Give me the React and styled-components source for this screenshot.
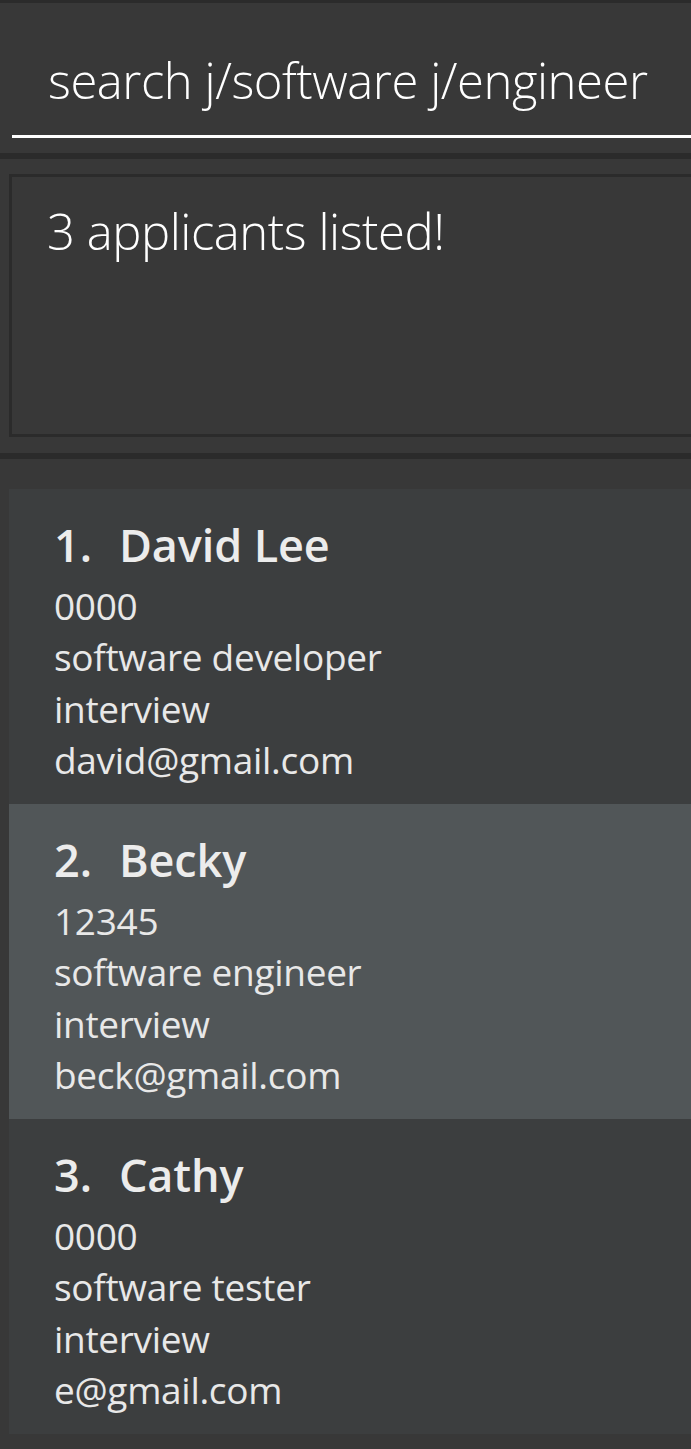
import React from 'react'
import styled, { createGlobalStyle } from 'styled-components'

const GlobalStyle = createGlobalStyle`
    html, body {
        margin: 0;
        padding: 0;
        background: #383838;
    }
    body {
        font-family: "Open Sans", "Noto Sans", sans-serif;
    }
`

const Window = styled.div`
    width: 100%;
    min-height: 1449px;
    display: flex;
    flex-direction: column;
    gap: 6px;
    padding-top: 3px;
    background: #2b2b2b;
    overflow: hidden;
`
const Panel = styled.section`
    background: #383838;
    padding: ${props => props.pad};
    flex: ${props => props.grow ? '1' : 'none'};
`
const CommandInput = styled.div`
    height: 132px;
    box-sizing: border-box;
    padding: 40px 0 24px 36px;
    border-bottom: 3px solid #ffffff;
    font-size: 49px;
    font-weight: 300;
    letter-spacing: -0.45px;
    line-height: 68px;
    color: #ffffff;
    white-space: nowrap;
`
const ResultBox = styled.div`
    height: 263px;
    box-sizing: border-box;
    border: 3px solid #2b2b2b;
    border-right: none;
    padding: 20px 0 0 35px;
    font-size: 49px;
    font-weight: 300;
    letter-spacing: -0.45px;
    line-height: 68px;
    color: #ffffff;
`
const List = styled.div`
    display: flex;
    flex-direction: column;
`
const Cell = styled.div`
    height: 315px;
    box-sizing: border-box;
    padding: 21px 0 19px 45px;
    background: ${props => props.alt ? '#515658' : '#3c3e3f'};
    display: flex;
    flex-direction: column;
`
const NameRow = styled.div`
    display: flex;
    gap: 27px;
    font-size: 45px;
    font-weight: 600;
    letter-spacing: -0.1px;
    line-height: 70px;
    color: #ececec;
`
const Detail = styled.div`
    font-size: 37px;
    font-weight: 400;
    letter-spacing: -0.3px;
    line-height: 51.25px;
    color: #e8e8e8;
`

const applicants = [
    { name: 'David Lee', phone: '0000', job: 'software developer', stage: 'interview', email: 'david@gmail.com' },
    { name: 'Becky', phone: '12345', job: 'software engineer', stage: 'interview', email: 'beck@gmail.com' },
    { name: 'Cathy', phone: '0000', job: 'software tester', stage: 'interview', email: 'e@gmail.com' },
]

export default function App() {
    return (
        <>
            <GlobalStyle />
            <Window>
                <Panel pad="3px 0 15px 12px">
                    <CommandInput>search j/software j/engineer</CommandInput>
                </Panel>
                <Panel pad="15px 0 16px 9px">
                    <ResultBox>3 applicants listed!</ResultBox>
                </Panel>
                <Panel pad="30px 0 16px 9px" grow>
                    <List>
                        {applicants.map((a, i) => (
                            <Cell key={a.name} alt={i % 2 === 1}>
                                <NameRow>
                                    <span>{i + 1}.</span>
                                    <span>{a.name}</span>
                                </NameRow>
                                <Detail>{a.phone}</Detail>
                                <Detail>{a.job}</Detail>
                                <Detail>{a.stage}</Detail>
                                <Detail>{a.email}</Detail>
                            </Cell>
                        ))}
                    </List>
                </Panel>
            </Window>
        </>
    )
}
